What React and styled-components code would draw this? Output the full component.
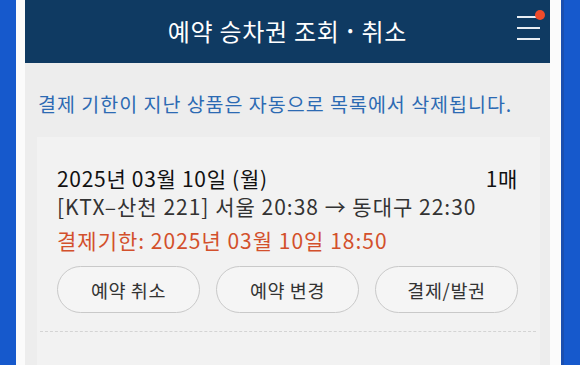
import React from "react";
import styled, { createGlobalStyle } from "styled-components";

const Global = createGlobalStyle`
  html, body { margin: 0; padding: 0; }
  body { font-family: "Noto Sans CJK KR", "Noto Sans", sans-serif; overflow: hidden; }
`;

const Page = styled.div`
  display: flex;
  height: 365px;
  width: 580px;
  background: #1659cc;
  padding: 0 19px 0 16px;
  box-sizing: border-box;
`;

const Frame = styled.div`
  flex: 1;
  display: flex;
  background: #fbfbfb;
  padding: 0 11px 0 9px;
  box-shadow: 3px 0 0 #1a4fb0;
`;

const Panel = styled.div`
  flex: 1;
  display: flex;
  flex-direction: column;
  background: #ededed;
  overflow: hidden;
`;

const Header = styled.header`
  position: relative;
  height: 63px;
  display: flex;
  align-items: center;
  justify-content: center;
  background: #0f3a62;
  color: #fff;
  font-size: 24px;
  letter-spacing: 0.7px;
  padding-bottom: 3px;
  box-sizing: border-box;
`;

const Bullet = styled.span`
  font-size: 16px;
  margin: 0 8px;
  position: relative;
  top: -1px;
`;

const Menu = styled.div`
  position: absolute;
  right: 10px;
  top: 16px;
  width: 23px;
  display: flex;
  flex-direction: column;
  gap: 9px;
`;

const MenuLine = styled.span`
  display: block;
  height: 2px;
  background: #e8edf3;
`;

const Dot = styled.span`
  position: absolute;
  right: -5px;
  top: -6px;
  width: 10px;
  height: 10px;
  border-radius: 50%;
  background: #ef4b2b;
`;

const Notice = styled.p`
  margin: 0;
  padding: 26px 0 0 13px;
  height: 74px;
  box-sizing: border-box;
  color: #2c6ab3;
  font-size: 19.5px;
  letter-spacing: 1px;
  white-space: nowrap;
`;

const Card = styled.section`
  margin: 0 10px 0 12px;
  padding: 27px 22px 0 20px;
  background: #f2f2f2;
  flex: 1;
`;

const TopRow = styled.div`
  display: flex;
  justify-content: space-between;
  align-items: baseline;
  color: #111;
  font-size: 21px;
  line-height: 28px;
  letter-spacing: 0.7px;
`;

const Line = styled.div`
  color: ${(p) => p.$color};
  font-size: 21px;
  line-height: 28px;
  letter-spacing: 1px;
  margin-top: ${(p) => p.$mt || 0}px;
  white-space: nowrap;
`;

const Buttons = styled.div`
  display: grid;
  grid-template-columns: repeat(3, 1fr);
  gap: 16px;
  margin-top: 12px;
`;

const Button = styled.button`
  height: 47px;
  border-radius: 24px;
  border: 1px solid #c9c9c9;
  background: #f5f5f5;
  color: #333;
  font-family: inherit;
  font-size: 18.5px;
  letter-spacing: 0.6px;
  padding: 0;
`;

const Divider = styled.hr`
  margin: 18px -18px 0 -17px;
  border: none;
  border-top: 1px dashed #d4d4d4;
`;

export default function App() {
  return (
    <>
      <Global />
      <Page>
        <Frame>
          <Panel>
            <Header>
              예약 승차권 조회<Bullet>•</Bullet>취소
              <Menu>
                <MenuLine />
                <MenuLine />
                <MenuLine />
                <Dot />
              </Menu>
            </Header>
            <Notice>결제 기한이 지난 상품은 자동으로 목록에서 삭제됩니다.</Notice>
            <Card>
              <TopRow>
                <span>2025년 03월 10일 (월)</span>
                <span>1매</span>
              </TopRow>
              <Line $color="#333">[KTX–산천 221] 서울 20:38 → 동대구 22:30</Line>
              <Line $color="#d3502c" $mt={6}>결제기한: 2025년 03월 10일 18:50</Line>
              <Buttons>
                <Button>예약 취소</Button>
                <Button>예약 변경</Button>
                <Button>결제/발권</Button>
              </Buttons>
              <Divider />
            </Card>
          </Panel>
        </Frame>
      </Page>
    </>
  );
}
